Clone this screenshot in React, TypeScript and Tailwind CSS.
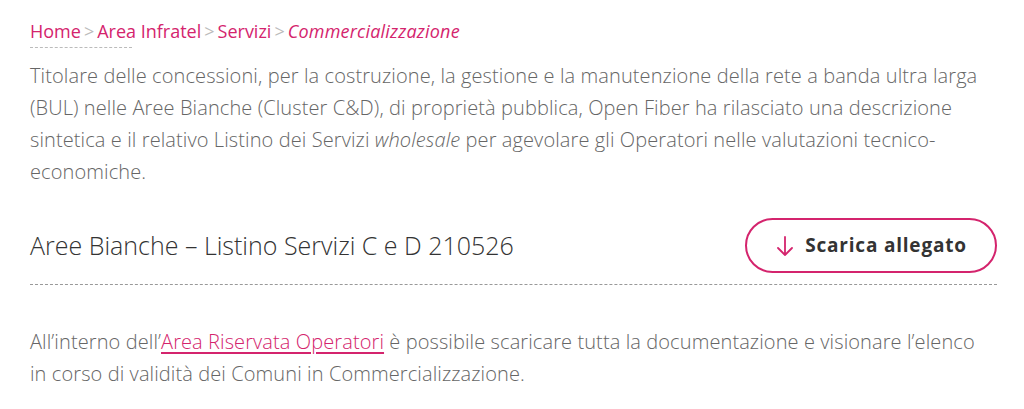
import React from 'react';

const pink = 'text-[#d4246d]';

export default function App() {
  return (
    <div className="min-h-[409px] bg-white font-['Open_Sans',sans-serif]">
      <div className="ml-[30px] w-[967px] pt-[18px]">
        <nav className="flex items-baseline text-[18px] leading-[26px]">
          <a className={pink}>Home</a>
          <span className="mx-[3px] text-[#bbb]">&gt;</span>
          <a className={pink}>Area Infratel</a>
          <span className="mx-[3px] text-[#bbb]">&gt;</span>
          <a className={pink}>Servizi</a>
          <span className="mx-[3px] text-[#bbb]">&gt;</span>
          <span className={`${pink} italic tracking-[0.2px]`}>Commercializzazione</span>
        </nav>
        <div className="mt-[3px] w-[102px] border-b border-dashed border-[#bbb]" />

        <p className="mt-[12px] text-[20px] leading-[32px] font-light tracking-[0.1px] text-[#666]">
          Titolare delle concessioni, per la costruzione, la gestione e la manutenzione della rete a banda ultra larga<br />
          (BUL) nelle Aree Bianche (Cluster C&amp;D), di proprietà pubblica, Open Fiber ha rilasciato una descrizione<br />
          sintetica e il relativo Listino dei Servizi <em>wholesale</em> per agevolare gli Operatori nelle valutazioni tecnico-<br />
          economiche.
        </p>

        <div className="mt-[30px] flex items-center justify-between border-b border-dashed border-[#999] pb-[11px]">
          <h3 className="text-[25px] font-light text-[#333]">Aree Bianche – Listino Servizi C e D 210526</h3>
          <button className="flex h-[55px] w-[252px] items-center justify-center gap-[10px] rounded-full border-2 border-[#d4246d] text-[19px] font-bold tracking-[0.8px] text-[#333]">
            <svg width="20" height="22" viewBox="0 0 20 22" fill="none" stroke="#d4246d" strokeWidth="1.8" strokeLinecap="round" strokeLinejoin="round">
              <path d="M10 2v18M3 13l7 7 7-7" />
            </svg>
            Scarica allegato
          </button>
        </div>

        <p className="mt-[41px] text-[20px] leading-[32px] font-light tracking-[0.1px] text-[#666]">
          All’interno dell’<a className={`${pink} underline underline-offset-[3px]`}>Area Riservata Operatori</a> è possibile scaricare tutta la documentazione e visionare l’elenco<br />
          in corso di validità dei Comuni in Commercializzazione.
        </p>
      </div>
    </div>
  );
}
